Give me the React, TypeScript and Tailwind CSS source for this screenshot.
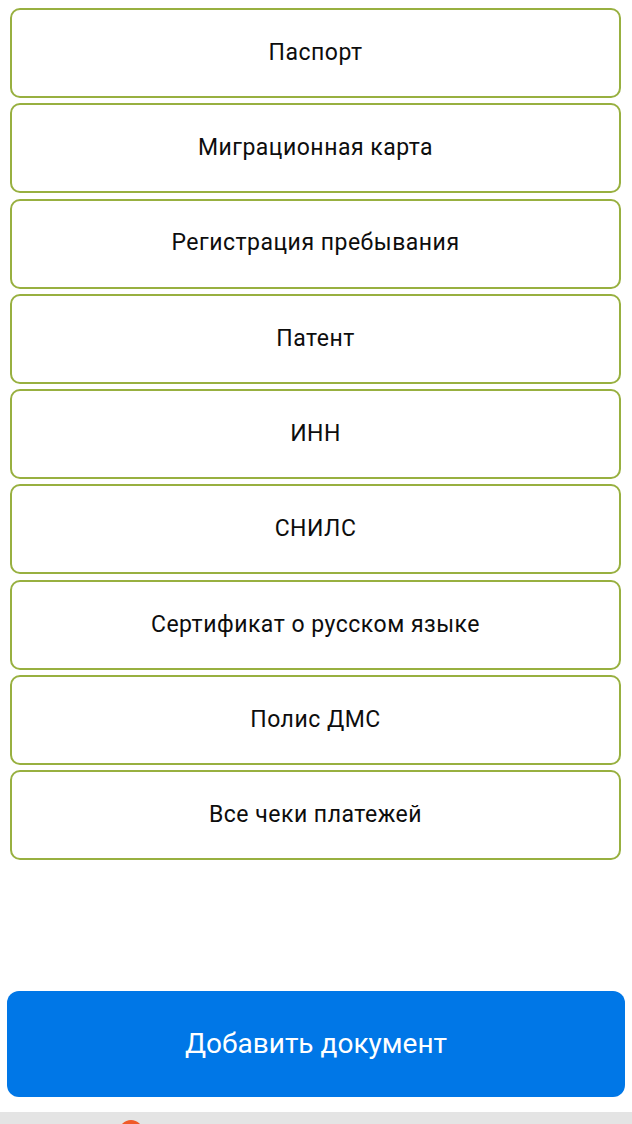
import React from 'react';

const documents = [
  'Паспорт',
  'Миграционная карта',
  'Регистрация пребывания',
  'Патент',
  'ИНН',
  'СНИЛС',
  'Сертификат о русском языке',
  'Полис ДМС',
  'Все чеки платежей',
];

export default function App() {
  return (
    <div
      className="w-[632px] h-[1124px] bg-white flex flex-col overflow-hidden"
      style={{ fontFamily: 'Roboto, "Noto Sans", sans-serif' }}
    >
      {/* Document list */}
      <div className="flex flex-col gap-[5.3px] pt-[8px] pl-[10px] pr-[11px]">
        {documents.map((doc) => (
          <button
            key={doc}
            className="h-[90px] w-full rounded-[10px] border-2 border-[#98b040] bg-white flex items-center justify-center text-[23px] tracking-[0.5px] text-[#0d0d0d]"
          >
            {doc}
          </button>
        ))}
      </div>

      <div className="flex-1" />

      {/* Add button */}
      <div className="px-[7px] pb-[15px]">
        <button className="h-[106px] w-full rounded-[12px] bg-[#0077e7] text-white text-[28px] flex items-center justify-center">
          Добавить документ
        </button>
      </div>

      {/* Bottom bar */}
      <div className="h-[12px] bg-[#e4e4e4] relative">
        <span className="absolute left-[119px] top-[8px] w-[24px] h-[24px] rounded-full bg-[#f05a28]" />
      </div>
    </div>
  );
}
